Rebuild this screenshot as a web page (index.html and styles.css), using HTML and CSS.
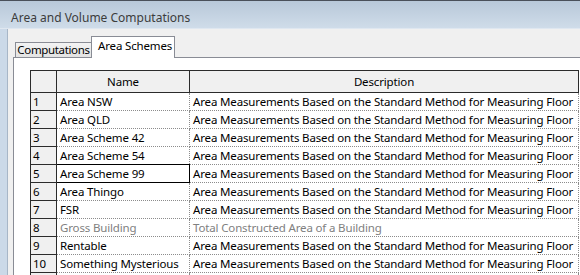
FILE: index.html
```html
<!DOCTYPE html>
<html>
<head>
<meta charset="utf-8">
<link rel="stylesheet" href="styles.css">
</head>
<body>
<div class="window">
  <div class="titlebar">Area and Volume Computations</div>
  <div class="frame">
    <div class="content">
      <div class="tabs">
        <div class="tab">Computations</div>
        <div class="tab active">Area Schemes</div>
      </div>
      <div class="panel">
        <table class="grid">
          <colgroup><col class="c-num"><col class="c-name"><col class="c-desc"></colgroup>
          <thead>
            <tr><th></th><th>Name</th><th>Description</th></tr>
          </thead>
          <tbody>
            <tr><td class="num">1</td><td>Area NSW</td><td>Area Measurements Based on the Standard Method for Measuring Floor</td></tr>
            <tr><td class="num">2</td><td>Area QLD</td><td>Area Measurements Based on the Standard Method for Measuring Floor</td></tr>
            <tr><td class="num">3</td><td>Area Scheme 42</td><td>Area Measurements Based on the Standard Method for Measuring Floor</td></tr>
            <tr><td class="num">4</td><td>Area Scheme 54</td><td>Area Measurements Based on the Standard Method for Measuring Floor</td></tr>
            <tr><td class="num">5</td><td class="focus">Area Scheme 99</td><td>Area Measurements Based on the Standard Method for Measuring Floor</td></tr>
            <tr><td class="num">6</td><td>Area Thingo</td><td>Area Measurements Based on the Standard Method for Measuring Floor</td></tr>
            <tr><td class="num">7</td><td>FSR</td><td>Area Measurements Based on the Standard Method for Measuring Floor</td></tr>
            <tr class="disabled"><td class="num">8</td><td>Gross Building</td><td>Total Constructed Area of a Building</td></tr>
            <tr><td class="num">9</td><td>Rentable</td><td>Area Measurements Based on the Standard Method for Measuring Floor</td></tr>
            <tr><td class="num">10</td><td>Something Mysterious</td><td>Area Measurements Based on the Standard Method for Measuring Floor</td></tr>
            <tr><td class="num"></td><td></td><td></td></tr>
          </tbody>
        </table>
      </div>
    </div>
  </div>
</div>
</body>
</html>
```

FILE: styles.css
```css
html, body {
  margin: 0;
  padding: 0;
  width: 580px;
  height: 275px;
  overflow: hidden;
  background: #f0f0f0;
  font-family: "Noto Sans", "Open Sans", sans-serif;
  font-size: 11.5px;
  letter-spacing: -0.15px;
  color: #000;
}

.window {
  width: 580px;
  height: 275px;
  display: flex;
  flex-direction: column;
  border-top: 1px solid #4a505a;
  box-sizing: border-box;
  overflow: hidden;
}

.titlebar {
  height: 28px;
  flex: none;
  box-sizing: border-box;
  padding: 9px 0 0 11px;
  background: linear-gradient(#b8c8d9, #cfdce9);
  border-bottom: 1px solid #dfe7f0;
  color: #3c3c3c;
  font-size: 12px;
  line-height: 16px;
  letter-spacing: 0;
}

.frame {
  flex: 1;
  display: flex;
  background: #cbd9e8;
  padding-left: 7px;
  min-height: 0;
}

.content {
  flex: 1;
  background: #f0f0f0;
  border-left: 1px solid #a7b6c7;
  padding: 8px 0 0 5px;
  display: flex;
  flex-direction: column;
  min-width: 0;
}

.tabs {
  display: flex;
  align-items: flex-end;
  padding-left: 2px;
  height: 20px;
  flex: none;
}

.tab {
  box-sizing: border-box;
  flex: none;
  height: 15px;
  width: 76px;
  border: 1px solid #898c95;
  border-bottom: none;
  border-right: none;
  background: linear-gradient(#f3f3f3, #e3e3e3);
  padding: 0;
  text-align: center;
  letter-spacing: -0.35px;
  line-height: 13px;
  white-space: nowrap;
  overflow: hidden;
}

.tab.active {
  height: 22px;
  width: 84px;
  margin-bottom: -1px;
  background: #fff;
  border-right: 1px solid #898c95;
  padding: 2px 0 0 6px;
  text-align: left;
  letter-spacing: -0.15px;
  line-height: 14px;
  position: relative;
  z-index: 1;
}

.panel {
  flex: 1;
  background: #fff;
  border-top: 1px solid #898c95;
  border-left: 1px solid #898c95;
  padding: 12px 0 0 16px;
}

.grid {
  border-collapse: collapse;
  table-layout: fixed;
  width: 548px;
}

.c-num { width: 26px; }
.c-name { width: 133px; }
.c-desc { width: 389px; }

.grid th {
  height: 21px;
  background: #f0f0f0;
  border: 1px solid #2b2b2b;
  font-weight: normal;
  text-align: center;
  padding: 0;
  line-height: 16px;
}

.grid td {
  height: 17px;
  border: 1px dotted #8c8c8c;
  padding: 0 0 0 3px;
  white-space: nowrap;
  overflow: hidden;
  line-height: 16px;
}

.grid td.num {
  background: #f0f0f0;
  border: 1px solid #2b2b2b;
  padding-left: 2px;
}

.grid td.focus {
  border: 1px solid #000;
}

.disabled td {
  color: #808080;
}

.disabled td.num {
  color: #000;
}
```
